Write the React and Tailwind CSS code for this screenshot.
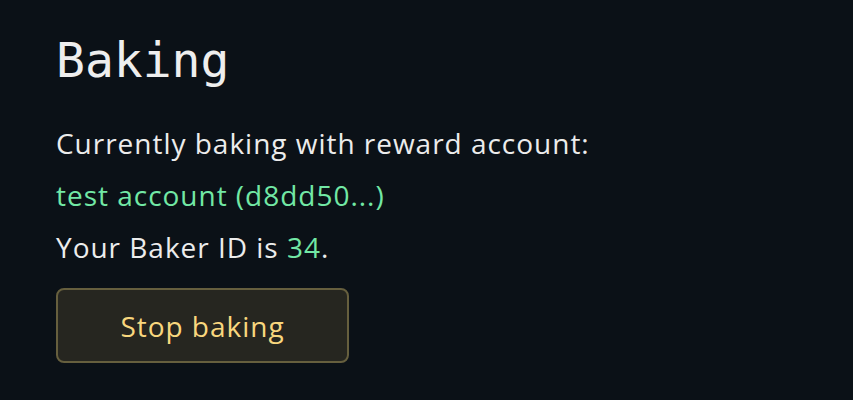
import React from 'react';

const App = () => {
    return (
        <div className="min-h-screen bg-[#0b1117] text-[#ececec] pl-[56px] pt-[30px] font-['Open_Sans',sans-serif]">
            <h1 className="text-[48px] leading-[60px] font-['DejaVu_Sans_Mono',monospace] text-[#eeeeee]">Baking</h1>
            <div className="mt-[27px] text-[28px] leading-[52px] tracking-[0.035em] font-medium">
                <p>Currently baking with reward account:</p>
                <p className="text-[#72e8a5]">test account (d8dd50...)</p>
                <p>
                    Your Baker ID is <span className="text-[#72e8a5]">34</span>.
                </p>
            </div>
            <button className="mt-[15px] w-[293px] h-[75px] rounded-[8px] border-2 border-[#665f3e] bg-[#262620] text-[28px] tracking-[0.035em] font-medium text-[#f9d77e]">
                Stop baking
            </button>
        </div>
    );
};

export default App;
